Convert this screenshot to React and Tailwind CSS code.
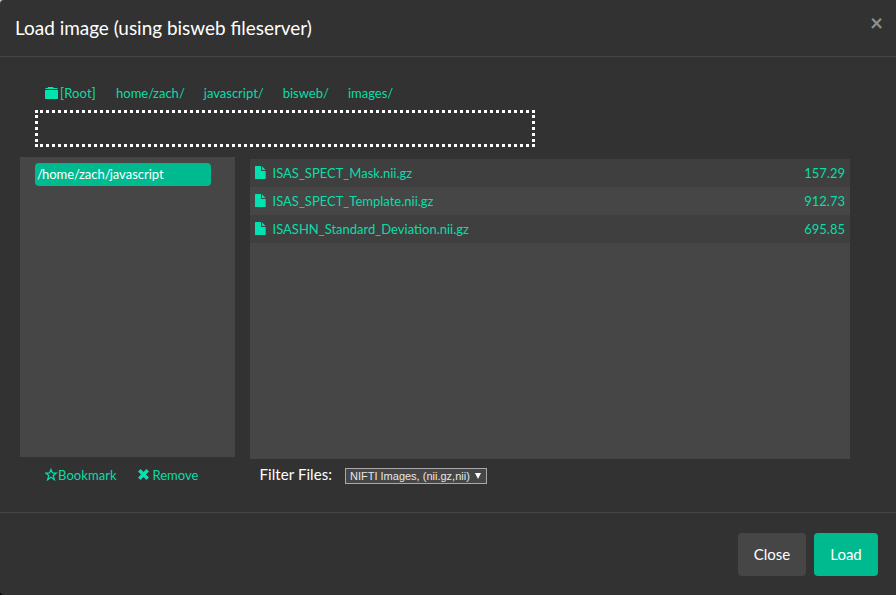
import React from "react";

const crumbs = ["home/zach/", "javascript/", "bisweb/", "images/"];

const files = [
  { name: "ISAS_SPECT_Mask.nii.gz", size: "157.29" },
  { name: "ISAS_SPECT_Template.nii.gz", size: "912.73" },
  { name: "ISASHN_Standard_Deviation.nii.gz", size: "695.85" },
];

function FolderIcon() {
  return (
    <svg className="h-3 w-[13px] shrink-0 text-[#00e3b0]" viewBox="0 0 13 12" fill="currentColor">
      <path d="M3 0h5l.7 1H12q.8 0 .8 1H0.2q0-1 .8-1h1.6z" />
      <path d="M0 3h13v8.4q0 .6-.6.6H.6Q0 12 0 11.400z" />
    </svg>
  );
}

function FileIcon() {
  return (
    <svg className="mb-px h-[13px] w-[11px] shrink-0 text-[#00e3b0]" viewBox="0 0 11 13" fill="currentColor">
      <path d="M.6 0H6v4.500q0 .5.500.500H10.700v7.400q0 .6-.6.600H.6Q0 13 0 12.400V.6Q0 0 .6 0z" />
      <path d="M7 0.300L10.500 4H7z" />
    </svg>
  );
}

function StarIcon() {
  return (
    <svg className="mb-[2px] h-[13px] w-[13px] shrink-0 text-[#00e3b0]" viewBox="0 0 13 13" fill="none" stroke="currentColor" strokeWidth="1.200">
      <path d="M6 1.500L7.400 5H11.300L8.200 7.500L9.400 11.700L6 9.300L2.600 11.700L3.800 7.500L0.700 5H4.600z" />
    </svg>
  );
}

function RemoveIcon() {
  return (
    <svg className="mb-px h-[11px] w-[11px] shrink-0 text-[#00e3b0]" viewBox="0 0 11 11" fill="none" stroke="currentColor" strokeWidth="3.6">
      <path d="M1.300 1.300L9.700 9.700M9.700 1.300L1.300 9.700" />
    </svg>
  );
}

// Path text with tightly set slashes.
function PathText({ value }) {
  return value
    .split(/(\/)/)
    .filter(Boolean)
    .map((part, i) =>
      part === "/" ? (
        <span key={i} className="tracking-[-1px]">/</span>
      ) : (
        <React.Fragment key={i}>{part}</React.Fragment>
      )
    );
}

export default function App() {
  return (
    <div className="h-[595px] w-[896px] overflow-hidden bg-linear-to-b from-[#cfc4b4] to-black font-['Lato',sans-serif] text-[15px] leading-[21px] text-white">
      <div className="flex h-full flex-col rounded-l-[4px] bg-[#323232]">
        <header className="flex h-[57px] shrink-0 items-start justify-between border-b border-[#464646] pl-[15px] pr-[13px]">
          <h4 className="pt-[15px] text-[18.95px] leading-[26px]">Load image (using bisweb fileserver)</h4>
          <button className="pt-[12px] text-[22.5px] font-bold leading-[22px] text-[#8f8f8f]">×</button>
        </header>

        <main className="flex h-[455px] shrink-0 flex-col pl-5 text-[13px] text-[#0cdca7]">
          <nav className="flex h-[53px] items-start pl-[25px] pt-[26px] leading-5">
            <a className="flex w-[71px] items-center gap-[2px] tracking-[0.15px]">
              <FolderIcon />[Root]
            </a>
            <div className="flex gap-5">
              {crumbs.map((crumb) => (
                <a key={crumb}>
                  <PathText value={crumb} />
                </a>
              ))}
            </div>
          </nav>
          <div className="ml-[15px] h-[37px] w-[500px] border-[3px] border-dotted border-white" />

          <div className="mt-[10px] flex h-[302px] gap-[15px]">
            <aside className="h-[300px] w-[215px] bg-[#464646] pl-[15px] pt-[6px]">
              <div className="h-[23px] w-[176px] rounded bg-[#00ba8f] pl-[2px] leading-[23px] text-white">
                <PathText value="/home/zach/javascript" />
              </div>
            </aside>
            <section className="mt-[2px] h-[300px] w-[600px] bg-[#464646]">
              {files.map((file) => (
                <div key={file.name} className="flex h-7 items-center pl-[5px] pr-[5px] odd:bg-[#3f3f3f]">
                  <FileIcon />
                  <span className="ml-[6.5px] flex-1">{file.name}</span>
                  <span>{file.size}</span>
                </div>
              ))}
            </section>
          </div>

          <div className="flex h-8 items-center pl-[25px]">
            <a className="flex w-[93px] items-center tracking-[0.08px]">
              <StarIcon />Bookmark
            </a>
            <a className="flex w-[121.500px] items-center gap-[3.500px]">
              <RemoveIcon />Remove
            </a>
            <span className="mb-[2px] w-[85.500px] text-[15px] tracking-[0.08px] text-white">Filter Files:</span>
            <button className="mt-px flex h-4 w-[142px] items-center justify-between border border-[#a9a9a9] bg-[#464646] pl-1 pr-[5px] font-['Liberation_Sans',Arial,sans-serif] text-[11px] leading-[14px] text-[#e6e6e6]">
              NIFTI Images, (nii.gz,nii)
              <svg className="h-[6px] w-[6px] text-white" viewBox="0 0 6 6" fill="currentColor">
                <path d="M0 0H6L3 6z" />
              </svg>
            </button>
          </div>
        </main>

        <footer className="flex flex-1 items-start justify-end gap-2 border-t border-[#464646] pr-[18px] pt-5">
          <button className="h-[43px] w-[68px] rounded bg-[#464646]">Close</button>
          <button className="h-[43px] w-16 rounded bg-[#00ba8f]">Load</button>
        </footer>
      </div>
    </div>
  );
}
